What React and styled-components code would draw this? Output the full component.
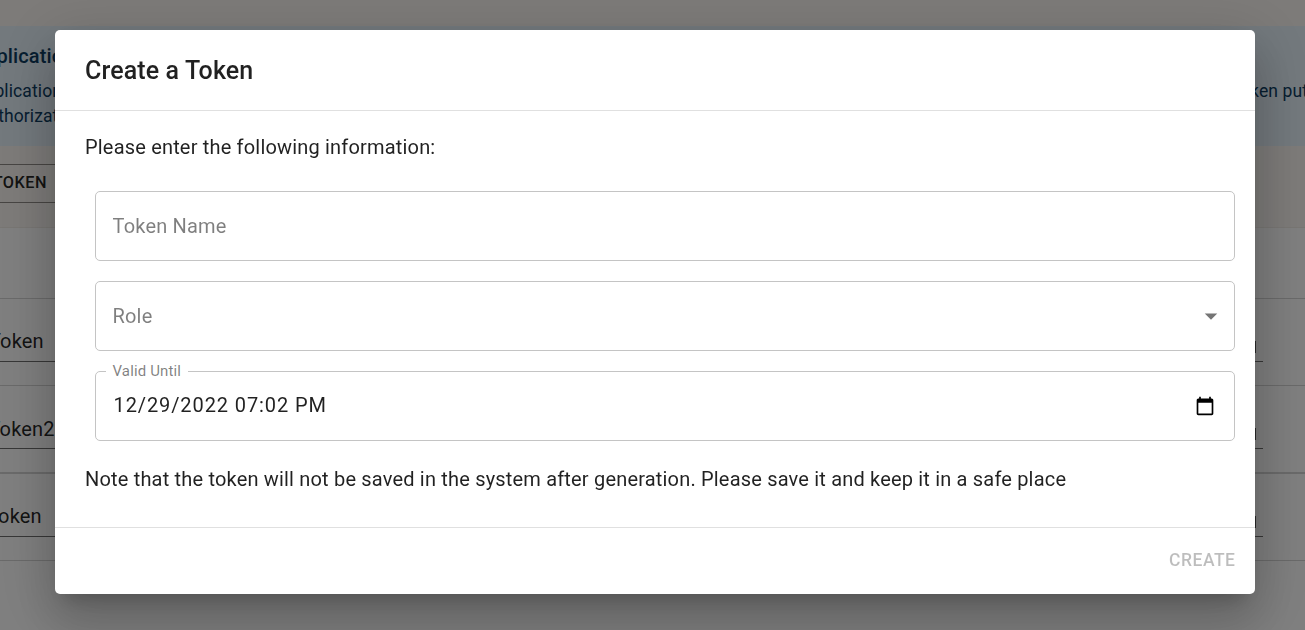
import React from "react";
import styled, { createGlobalStyle } from "styled-components";

const GlobalStyle = createGlobalStyle`
  *, *::before, *::after { box-sizing: border-box; }
  body {
    margin: 0;
    overflow: hidden;
    background: #fff;
    color: rgba(0, 0, 0, 0.87);
    font-family: Roboto, "Liberation Sans", sans-serif;
    font-size: 20px;
    line-height: 30px;
  }
`;

const Page = styled.main`
  height: 630px;
  overflow: hidden;
  display: flex;
  flex-direction: column;
`;

const Intro = styled.section`
  height: 228px;
  padding-top: 26px;
  background: #faf7f3;
  border-bottom: 1px solid #f0ece7;
`;

const Alert = styled.div`
  height: 120px;
  padding-top: 15px;
  background: #e6f2fb;
  color: #0d3c61;
  font-size: 17.5px;
  line-height: 25px;
  letter-spacing: 0.1px;
  white-space: nowrap;
`;

const AlertTitle = styled.div`
  margin-left: -28px;
  margin-bottom: 8px;
  font-size: 20px;
  line-height: 30px;
  font-weight: 500;
  letter-spacing: 0.1px;
`;

const AlertLine = styled.div`
  display: flex;
  justify-content: space-between;
  margin: 0 -3px 0 ${(p) => p.$shift}px;
`;

const NewTokenButton = styled.button`
  display: flex;
  align-items: center;
  justify-content: flex-end;
  width: 160px;
  height: 39px;
  margin: 18px 0 0 -99px;
  padding: 0 13px 2px;
  border: 1px solid #8f8b87;
  border-radius: 5px;
  background: transparent;
  color: rgba(0, 0, 0, 0.87);
  font: 500 16.25px Roboto, sans-serif;
  letter-spacing: 0.5px;
  white-space: nowrap;
`;

const TableHead = styled.div`
  height: 71px;
  border-bottom: 1px solid #d4d4d4;
`;

const TableRow = styled.div`
  display: flex;
  justify-content: space-between;
  height: ${(p) => p.$height}px;
  padding-top: 23px;
  border-bottom: ${(p) => p.$line || 1}px solid #d4d4d4;
`;

const Cell = styled.div`
  width: ${(p) => p.$width}px;
  height: 40px;
  margin: 0 ${(p) => p.$end || 0}px 0 0;
  padding-top: ${(p) => p.$top || 4}px;
  border-bottom: 1px solid #6e6e6e;
  white-space: nowrap;
`;

const CellText = styled.div`
  margin-left: ${(p) => p.$shift}px;
  letter-spacing: 0.15px;
`;

const CellMark = styled.div`
  width: 2px;
  height: 12px;
  margin: 15px 0 0 133px;
  background: #555;
`;

const Backdrop = styled.div`
  position: fixed;
  inset: 0;
  display: flex;
  justify-content: center;
  align-items: flex-start;
  padding: 30px 50px 0 55px;
  background: rgba(0, 0, 0, 0.5);
`;

const Dialog = styled.section`
  display: flex;
  flex-direction: column;
  width: 1200px;
  height: 564px;
  border-radius: 5px;
  background: #fff;
  box-shadow:
    0 13.75px 18.75px -8.75px rgba(0, 0, 0, 0.2),
    0 30px 47.5px 3.75px rgba(0, 0, 0, 0.14),
    0 11.25px 57.5px 10px rgba(0, 0, 0, 0.12);
`;

const DialogTitle = styled.h2`
  height: 80px;
  margin: 0;
  padding: 21px 30px 19px;
  font-size: 25px;
  line-height: 40px;
  font-weight: 500;
  letter-spacing: 0.12px;
`;

const DialogContent = styled.div`
  flex: 1;
  padding: 21px 20px 0 30px;
  border-top: 1px solid #e0e0e0;
  border-bottom: 1px solid #e0e0e0;
`;

const Message = styled.p`
  margin: 0;
  letter-spacing: 0.182px;
`;

const Fields = styled.div`
  display: grid;
  gap: 20px;
  margin: 29px 0 23px 10px;
`;

const Field = styled.div`
  position: relative;
  display: flex;
  align-items: center;
  justify-content: space-between;
  height: 70px;
  padding: 0 17px 0 ${(p) => (p.$filled ? 17.5 : 16.5)}px;
  border: 1px solid #c4c4c4;
  border-radius: 5px;
  color: ${(p) => (p.$filled ? "rgba(0, 0, 0, 0.87)" : "rgba(0, 0, 0, 0.5)")};
`;

const FieldText = styled.span`
  letter-spacing: ${(p) => p.$spacing || 0.1876}px;
  padding-bottom: ${(p) => p.$lift || 0}px;
`;

const FloatingLabel = styled.label`
  position: absolute;
  top: -11px;
  left: 10px;
  width: 82px;
  padding-left: 6.5px;
  background: #fff;
  color: rgba(0, 0, 0, 0.5);
  font-size: 15px;
  line-height: 20px;
  letter-spacing: 0.14px;
  white-space: nowrap;
`;

const Icon = styled.svg`
  display: block;
  flex: none;
  margin-right: ${(p) => p.$end || 0}px;
`;

const DialogActions = styled.footer`
  display: flex;
  align-items: center;
  justify-content: flex-end;
  height: 66px;
  padding: 0 19.5px 2px 0;
`;

const CreateButton = styled.button`
  padding: 0;
  border: 0;
  background: transparent;
  color: rgba(0, 0, 0, 0.26);
  font: 500 17.5px/30px Roboto, sans-serif;
  letter-spacing: 0.5px;
`;

const rows = [
  { name: "Token", shift: -11, height: 87 },
  { name: "Token2", shift: -11.5, height: 88, line: 2, top: 5 },
  { name: "Token", shift: -13, height: 87 },
];

export default function App() {
  return (
    <>
      <GlobalStyle />
      <Page>
        <Intro>
          <Alert>
            <AlertTitle>Application</AlertTitle>
            <AlertLine $shift={-27}>
              <span>Application</span>
              <span>token put</span>
            </AlertLine>
            <AlertLine $shift={-23}>
              <span>Authorization</span>
            </AlertLine>
          </Alert>
          <NewTokenButton>NEW TOKEN</NewTokenButton>
        </Intro>
        <TableHead />
        {rows.map((row, i) => (
          <TableRow key={i} $height={row.height} $line={row.line}>
            <Cell $width={240} $top={row.top}>
              <CellText $shift={row.shift}>{row.name}</CellText>
            </Cell>
            <Cell $width={142} $end={42}>
              <CellMark />
            </Cell>
          </TableRow>
        ))}
      </Page>
      <Backdrop>
        <Dialog role="dialog" aria-modal="true">
          <DialogTitle>Create a Token</DialogTitle>
          <DialogContent>
            <Message>Please enter the following information:</Message>
            <Fields>
              <Field>
                <FieldText>Token Name</FieldText>
              </Field>
              <Field>
                <FieldText>Role</FieldText>
                <Icon $end={-9} width="30" height="30" viewBox="0 0 24 24">
                  <path d="M7 10l5 5 5-5z" fill="#757575" />
                </Icon>
              </Field>
              <Field $filled>
                <FloatingLabel>Valid Until</FloatingLabel>
                <FieldText $spacing={0.9} $lift={2}>12/29/2022 07:02 PM</FieldText>
                <Icon $end={2} width="20" height="20" viewBox="0 0 24 24">
                  <path
                    d="M20 3h-1V1h-2v2H7V1H5v2H4c-1.1 0-2 .9-2 2v16c0 1.1.9 2 2 2h16c1.1 0 2-.9 2-2V5c0-1.1-.9-2-2-2zm0 18H4V8h16v13z"
                    fill="#000"
                  />
                </Icon>
              </Field>
            </Fields>
            <Message>
              Note that the token will not be saved in the system after generation. Please save it and keep it in a safe place
            </Message>
          </DialogContent>
          <DialogActions>
            <CreateButton disabled>CREATE</CreateButton>
          </DialogActions>
        </Dialog>
      </Backdrop>
    </>
  );
}
